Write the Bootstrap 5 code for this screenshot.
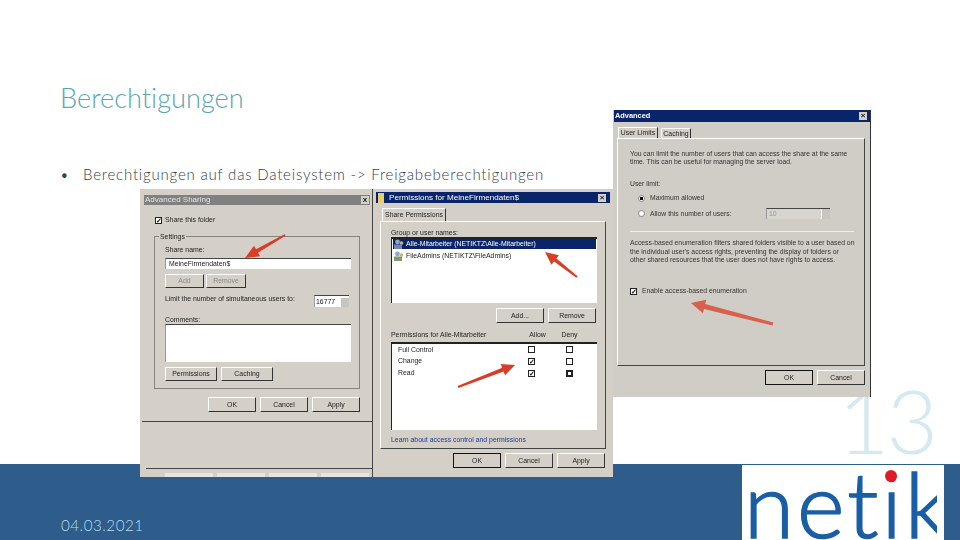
<!DOCTYPE html>
<html lang="de">
<head>
<meta charset="utf-8">
<title>Berechtigungen</title>
<link href="https://cdn.jsdelivr.net/npm/bootstrap@5.3.0/dist/css/bootstrap.min.css" rel="stylesheet">
<style>
html,body{margin:0;background:#fff;}
.slide{position:relative;width:960px;height:540px;overflow:hidden;background:#fff;font-family:Lato,"Liberation Sans",sans-serif;font-variant-ligatures:none;}
.slide-head{height:464px;padding:79px 0 0 60px;}
.slide-title{font-family:Lato,sans-serif;font-weight:300;font-size:27.2px;line-height:38px;color:#5aa6b4;margin:0;}
.slide-list{list-style:none;margin:47px 0 0;padding:0;font-size:15px;line-height:20px;color:#33424e;font-weight:300;letter-spacing:.8px;}
.slide-bullet{width:23px;}
.slide-foot{height:76px;background:#2e5c8b;padding:49px 0 0 61px;}
.slide-date{font-weight:300;font-size:15.2px;line-height:20px;color:#bcdcf0;letter-spacing:.5px;}
.page-num{position:absolute;left:838px;top:382px;font-weight:300;font-size:89px;line-height:76px;color:#d4e9f1;letter-spacing:-3px;}
.logo-box{position:absolute;left:742px;top:465px;width:195px;height:75px;background:#fff;overflow:hidden;}
.logo-edge{position:absolute;left:937px;top:465px;width:7px;height:75px;background:#fff;}
.logo-word{position:absolute;left:2px;top:-11px;font-family:Lato,sans-serif;font-weight:300;font-size:91px;line-height:98px;color:#1a5ea6;letter-spacing:3px;white-space:nowrap;-webkit-text-stroke:1.6px #1a5ea6;}
.logo-dot{position:absolute;left:143px;top:5px;width:12px;height:12px;border-radius:50%;background:#e11b25;}

.win{position:absolute;background:#d4d0c8;color:#222;font-family:"Liberation Sans",sans-serif;font-size:6.9px;line-height:8px;white-space:nowrap;filter:blur(.45px);}
.win-one{left:140px;top:189px;width:236px;height:288px;}
.win-two{left:372px;top:189px;width:241px;height:288px;border-left:1px solid #444;}
.win-three{left:613px;top:110px;width:258px;height:287px;border-right:1px solid #333;background:#d0cdc6;}
.bar{display:flex;align-items:center;justify-content:space-between;color:#fff;font-size:8.1px;}
.bar-x{width:8px;height:8px;background:#d4d0c8;color:#222;font-size:8px;font-weight:700;line-height:8px;text-align:center;}
.bar-one{height:10px;margin:6px 6px 0 4px;background:#808080;color:#e4e4e4;padding:0 1px 0 1px;font-size:8px;}
.bar-two{height:11px;margin:3px 3px 0 3px;background:#0a246a;padding:0 4px 0 2px;}
.bar-three{height:12px;margin:0 0 0 1px;background:#0a246a;padding:0 3px 0 1px;font-weight:700;font-size:7.4px;}
.file-ico{width:6px;height:10px;margin-right:5px;background:#e9cf6a;}
.xp{display:block;box-sizing:border-box;padding:0;border:1px solid #fff;border-right-color:#333;border-bottom-color:#333;border-radius:0;background:#d4d0c8;color:#222;font-size:6.9px;line-height:12px;text-align:center;height:15px;width:48px;}
.xp-def{border:1px solid #111;outline:0;}
.xp-off{color:#8a8a86;}
.box{display:block;width:7px;height:7px;border:1px solid #222;background:#fff;font-size:7px;line-height:5px;text-align:center;font-weight:700;color:#111;flex:none;}
.box-thick{border-width:2px;line-height:3px;}
.field{background:#fff;border-top:1px solid #444;border-left:1px solid #999;}
.spin-arrows{display:block;width:9px;height:100%;background:#c8c5be;border-left:1px solid #fff;}

.one-check{margin:11px 0 0 15px;height:8px;gap:3px;}
.one-group{position:relative;margin:12px 0 0 14px;width:206px;height:153px;border:1px solid #85837e;padding:9px 0 0 10px;}
.one-legend{position:absolute;left:4px;top:-4px;background:#d4d0c8;padding:0 1px;}
.one-input{margin-top:4px;width:186px;height:11px;padding:1px 3px;}
.one-small{margin-top:5px;gap:2px;}
.one-small .xp{height:14px;}
.one-add{width:39px;}
.one-rem{width:40px;}
.one-limit{margin-top:7px;width:184px;height:12px;}
.one-spin{width:35px;height:12px;padding:2px 0 0 1px;font-size:6.9px;}
.one-comm{margin-top:9px;}
.one-area{margin-top:0;width:186px;height:38px;}
.one-perm{margin-top:5px;gap:4px;}
.one-perm .xp{width:52px;height:14px;}
.one-btns{margin:8px 0 0 68px;gap:4px;}
.one-line{margin:9px 0 0 2px;width:232px;border-top:1px solid #444;}
.one-line2{margin:46px 0 0 6px;width:228px;border-top:1px solid #444;}
.one-tops{margin:4px 0 0 25px;gap:4px;}
.top-piece{width:48px;height:4px;background:#e8e6e1;}

.tab{display:inline-block;background:#d4d0c8;border:1px solid #fff;border-right-color:#333;border-bottom:0;text-align:center;}
.two-tab{margin:5px 0 0 9px;width:64px;height:13px;line-height:12px;}
.two-panel{margin:0 0 0 7px;width:226px;height:228px;border:1px solid #fff;border-right-color:#444;border-bottom-color:#444;padding:7px 0 0 10px;}
.two-list{width:206px;height:66px;padding:0 1px;}
.two-top{border-top:2px solid #222;border-left:1px solid #222;}
.two-row{height:10px;line-height:10px;padding-left:13px;position:relative;}
.two-sel{background:#0a246a;color:#fff;}
.two-row + .two-row{margin-top:2px;}
.users{position:absolute;left:1px;top:0;}
.two-btns{margin:5px 0 0 105px;gap:4px;}
.two-head{margin-top:8px;width:206px;height:8px;}
.head-name{width:127px;}
.head-allow{width:39px;text-align:center;}
.head-deny{width:25px;text-align:center;}
.two-perm{margin-top:3px;width:206px;height:88px;padding:0 0 0 6px;}
.perm-row{height:12px;align-items:center;}
.perm-row:first-child{height:11px;}
.perm-name{width:130px;}
.perm-box{width:38px;}
.two-link{margin-top:6px;color:#1a3a94;}
.two-foot{margin:4px 0 0 80px;gap:4px;}

.three-tabs{margin:5px 0 0 5px;height:11px;gap:3px;}
.three-t1{width:40px;height:11px;line-height:10px;}
.three-t2{width:30px;height:10px;margin-top:1px;line-height:9px;}
.three-panel{margin:0 0 0 4px;width:248px;height:228px;border:1px solid #fff;border-right-color:#444;border-bottom-color:#444;padding:11px 0 0 12px;}
.copy{line-height:8px;font-size:6.8px;color:#333;}
.three-label{margin-top:14px;}
.three-radio{margin:6px 0 0 8px;height:8px;gap:5px;}
.radio-dot{width:7px;height:7px;border-radius:50%;background:#fff;border:1px solid #888;flex:none;}
.radio-on{background:radial-gradient(circle,#111 0 1.5px,#fff 2px);}
.three-radio2{margin:6px 0 0 8px;height:11px;width:192px;gap:5px;}
.three-spin{margin-left:auto;width:64px;height:11px;padding:0 0 0 2px;color:#999;background:#d8d5ce;line-height:10px;}
.three-sep{margin:12px 0 0 0;width:224px;border-top:1px solid #eee;}
.three-para{margin-top:7px;line-height:8.5px;}
.three-check{margin-top:22.5px;height:8px;gap:5px;}
.three-foot{margin:4px 0 0 152px;gap:4px;}

.overlay{position:absolute;left:0;top:0;width:960px;height:540px;pointer-events:none;}
</style>
</head>
<body>
<div class="slide">
  <div class="slide-head">
    <h1 class="slide-title">Berechtigungen</h1>
    <ul class="slide-list">
      <li class="d-flex"><span class="slide-bullet">•</span><span>Berechtigungen auf das Dateisystem -&gt; Freigabeberechtigungen</span></li>
    </ul>
  </div>
  <div class="slide-foot"><span class="slide-date">04.03.2021</span></div>
  <div class="page-num">13</div>
  <div class="logo-edge"></div>
  <div class="logo-box"><span class="logo-word">netik</span><span class="logo-dot"></span></div>

  <section class="win win-one">
    <div class="bar bar-one"><span>Advanced Sharing</span><span class="bar-x">x</span></div>
    <div class="d-flex align-items-center one-check"><span class="box">✓</span><span>Share this folder</span></div>
    <div class="one-group">
      <span class="one-legend">Settings</span>
      <div>Share name:</div>
      <div class="field one-input">MeineFirmendaten$</div>
      <div class="d-flex one-small"><button class="xp one-add xp-off">Add</button><button class="xp one-rem xp-off">Remove</button></div>
      <div class="d-flex justify-content-between one-limit"><span>Limit the number of simultaneous users to:</span><span class="field one-spin d-flex justify-content-between">16777<span class="spin-arrows"></span></span></div>
      <div class="one-comm">Comments:</div>
      <div class="field one-area"></div>
      <div class="d-flex one-perm"><button class="xp">Permissions</button><button class="xp">Caching</button></div>
    </div>
    <div class="d-flex one-btns"><button class="xp">OK</button><button class="xp">Cancel</button><button class="xp">Apply</button></div>
    <div class="one-line"></div>
    <div class="one-line2"></div>
    <div class="d-flex one-tops"><span class="top-piece"></span><span class="top-piece"></span><span class="top-piece"></span><span class="top-piece"></span></div>
  </section>

  <section class="win win-two">
    <div class="bar bar-two"><span class="d-flex align-items-center"><span class="file-ico"></span>Permissions for MeineFirmendaten$</span><span class="bar-x">×</span></div>
    <div class="tab two-tab">Share Permissions</div>
    <div class="two-panel">
      <div>Group or user names:</div>
      <div class="field two-top two-list">
        <div class="two-row two-sel"><svg class="users" width="10" height="10" viewBox="0 0 10 10"><circle cx="3.5" cy="3" r="2.4" fill="#8fa8c8"/><rect x="0" y="5.5" width="8" height="4.5" fill="#6f88b0"/><circle cx="7.5" cy="4" r="1.8" fill="#c9b56a"/></svg>Alle-Mitarbeiter (NETIKTZ\Alle-Mitarbeiter)</div>
        <div class="two-row"><svg class="users" width="10" height="10" viewBox="0 0 10 10"><circle cx="3.5" cy="3" r="2.4" fill="#8fa8c8"/><rect x="0" y="5.5" width="8" height="4.5" fill="#7f9c70"/><circle cx="7.5" cy="4" r="1.8" fill="#c9b56a"/></svg>FileAdmins (NETIKTZ\FileAdmins)</div>
      </div>
      <div class="d-flex two-btns"><button class="xp">Add...</button><button class="xp">Remove</button></div>
      <div class="d-flex two-head"><span class="head-name">Permissions for Alle-Mitarbeiter</span><span class="head-allow">Allow</span><span class="head-deny">Deny</span></div>
      <div class="field two-top two-perm">
        <div class="d-flex perm-row"><span class="perm-name">Full Control</span><span class="perm-box"><span class="box"></span></span><span class="box"></span></div>
        <div class="d-flex perm-row"><span class="perm-name">Change</span><span class="perm-box"><span class="box">✓</span></span><span class="box"></span></div>
        <div class="d-flex perm-row"><span class="perm-name">Read</span><span class="perm-box"><span class="box">✓</span></span><span class="box box-thick"></span></div>
      </div>
      <div class="two-link">Learn about access control and permissions</div>
    </div>
    <div class="d-flex two-foot"><button class="xp xp-def">OK</button><button class="xp">Cancel</button><button class="xp">Apply</button></div>
  </section>

  <section class="win win-three">
    <div class="bar bar-three"><span>Advanced</span><span class="bar-x">×</span></div>
    <div class="d-flex three-tabs"><span class="tab three-t1">User Limits</span><span class="tab three-t2">Caching</span></div>
    <div class="three-panel">
      <div class="copy">You can limit the number of users that can access the share at the same<br>time. This can be useful for managing the server load.</div>
      <div class="copy three-label">User limit:</div>
      <div class="d-flex align-items-center three-radio"><span class="radio-dot radio-on"></span><span class="copy">Maximum allowed</span></div>
      <div class="d-flex align-items-center three-radio2"><span class="radio-dot"></span><span class="copy">Allow this number of users:</span><span class="field three-spin d-flex justify-content-between">10<span class="spin-arrows"></span></span></div>
      <div class="three-sep"></div>
      <div class="copy three-para">Access-based enumeration filters shared folders visible to a user based on<br>the individual user's access rights, preventing the display of folders or<br>other shared resources that the user does not have rights to access.</div>
      <div class="d-flex align-items-center three-check"><span class="box">✓</span><span class="copy">Enable access-based enumeration</span></div>
    </div>
    <div class="d-flex three-foot"><button class="xp xp-def">OK</button><button class="xp">Cancel</button></div>
  </section>

  <svg class="overlay" viewBox="0 0 960 540">
    <polygon fill="#d93d25" points="284.5,234.2 285.5,235.8 258,252.7 260,256.2 245,258 254,245.8 256,249.3"/>
    <polygon fill="#d93d25" points="577.6,276.2 556.4,258.4 558.9,255.3 545,252 551.5,264.7 554,261.6 576.4,277.8"/>
    <polygon fill="#d93d25" points="458.4,388 503.6,371.6 505,375.3 515,365 500.7,364.1 502.2,367.8 457.6,386"/>
    <polygon fill="#d8604c" points="773.4,322.5 705.2,304.1 706.3,299.7 691,303 702.9,313.3 704,308.9 772.6,325.5"/>
  </svg>
</div>
</body>
</html>
